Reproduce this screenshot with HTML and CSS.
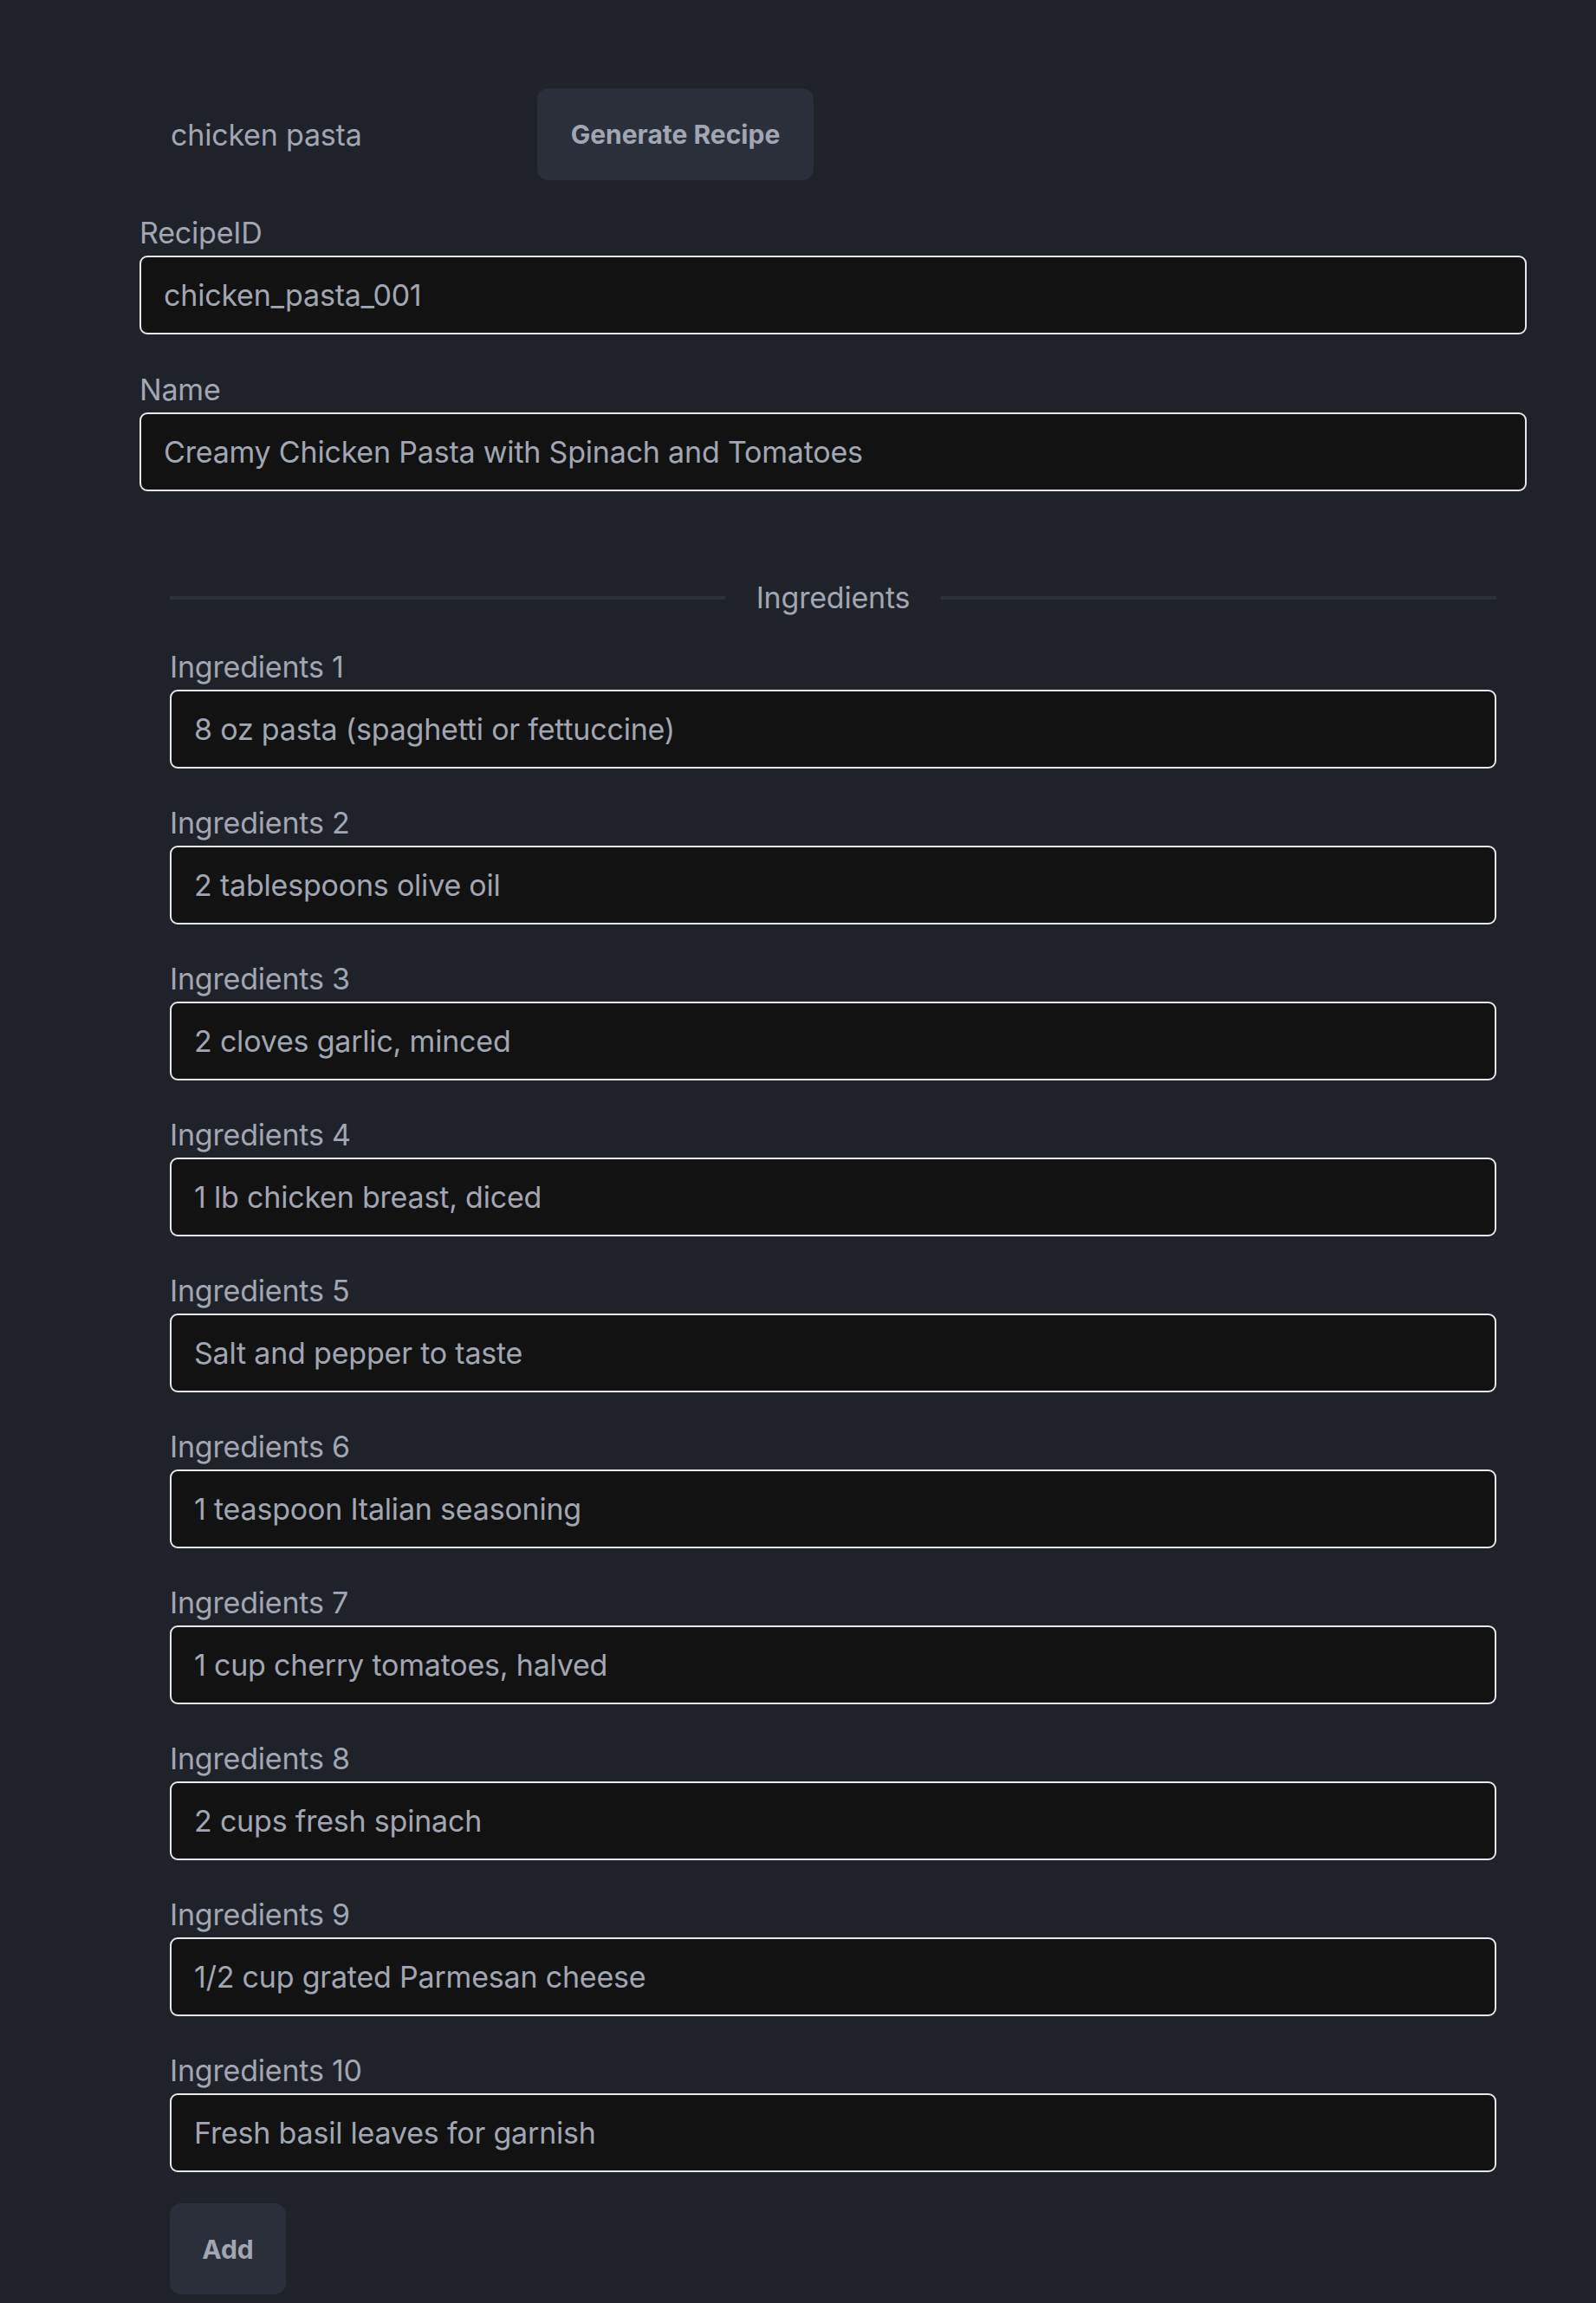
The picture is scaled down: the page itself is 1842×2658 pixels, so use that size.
FILE: index.html
```html
<!DOCTYPE html>
<html lang="en">
<head>
<meta charset="utf-8">
<title>Recipe</title>
<link rel="stylesheet" href="styles.css">
</head>
<body>
<main class="form">
  <div class="search-row">
    <input class="query" type="text" value="chicken pasta">
    <button class="btn btn-generate" type="button">Generate Recipe</button>
  </div>

  <div class="field">
    <label class="label">RecipeID</label>
    <input class="text-input" type="text" value="chicken_pasta_001">
  </div>

  <div class="field">
    <label class="label">Name</label>
    <input class="text-input" type="text" value="Creamy Chicken Pasta with Spinach and Tomatoes">
  </div>

  <section class="group">
    <div class="group-title">
      <span class="rule"></span>
      <span class="group-name">Ingredients</span>
      <span class="rule"></span>
    </div>

    <div class="group-fields">
      <div class="field field-sub">
        <label class="label">Ingredients 1</label>
        <input class="text-input" type="text" value="8 oz pasta (spaghetti or fettuccine)">
      </div>
      <div class="field field-sub">
        <label class="label">Ingredients 2</label>
        <input class="text-input" type="text" value="2 tablespoons olive oil">
      </div>
      <div class="field field-sub">
        <label class="label">Ingredients 3</label>
        <input class="text-input" type="text" value="2 cloves garlic, minced">
      </div>
      <div class="field field-sub">
        <label class="label">Ingredients 4</label>
        <input class="text-input" type="text" value="1 lb chicken breast, diced">
      </div>
      <div class="field field-sub">
        <label class="label">Ingredients 5</label>
        <input class="text-input" type="text" value="Salt and pepper to taste">
      </div>
      <div class="field field-sub">
        <label class="label">Ingredients 6</label>
        <input class="text-input" type="text" value="1 teaspoon Italian seasoning">
      </div>
      <div class="field field-sub">
        <label class="label">Ingredients 7</label>
        <input class="text-input" type="text" value="1 cup cherry tomatoes, halved">
      </div>
      <div class="field field-sub">
        <label class="label">Ingredients 8</label>
        <input class="text-input" type="text" value="2 cups fresh spinach">
      </div>
      <div class="field field-sub">
        <label class="label">Ingredients 9</label>
        <input class="text-input" type="text" value="1/2 cup grated Parmesan cheese">
      </div>
      <div class="field field-sub">
        <label class="label">Ingredients 10</label>
        <input class="text-input" type="text" value="Fresh basil leaves for garnish">
      </div>
    </div>

    <div class="actions">
      <button class="btn btn-add" type="button">Add</button>
    </div>
  </section>
</main>
</body>
</html>
```

FILE: styles.css
```css
* {
  box-sizing: border-box;
}

html, body {
  margin: 0;
  padding: 0;
  background: #1f2229;
}

body {
  font-family: Inter, "Noto Sans", "Liberation Sans", sans-serif;
  color: #a1a6b2;
}

.form {
  width: 1601px;
  margin-left: 161px;
  padding-top: 102px;
  display: flex;
  flex-direction: column;
}

.search-row {
  display: flex;
  align-items: center;
  gap: 22px;
  margin-bottom: 35px;
}

.query {
  width: 437px;
  height: 106px;
  padding: 0 36px;
  border: none;
  outline: none;
  background: transparent;
  font-family: inherit;
  font-size: 34px;
  letter-spacing: -0.2px;
  color: #a1a6b2;
}

.btn {
  height: 106px;
  padding: 0 37px;
  border: none;
  border-radius: 13px;
  background: #2b2f39;
  color: #a1a6b2;
  font-family: inherit;
  font-size: 30px;
  font-weight: 700;
  cursor: pointer;
}

.btn-generate {
  width: 319px;
  padding: 0;
}

.btn-add {
  width: 134px;
  height: 105px;
  padding: 0;
}

.field {
  display: flex;
  flex-direction: column;
  margin-bottom: 38px;
}

.label {
  font-size: 34px;
  line-height: 51px;
  height: 51px;
  margin-bottom: 1px;
  letter-spacing: -0.2px;
  color: #a1a6b2;
}

.text-input {
  height: 91px;
  width: 100%;
  padding: 0 26px;
  border: 2px solid #e6e7ea;
  border-radius: 9px;
  background: #121212;
  outline: none;
  font-family: inherit;
  font-size: 34px;
  letter-spacing: -0.2px;
  color: #a1a6b2;
}

.group {
  margin: 59px 35px 0;
  display: flex;
  flex-direction: column;
}

.group-title {
  display: flex;
  align-items: center;
  gap: 36px;
  height: 51px;
  margin-bottom: 29px;
}

.rule {
  flex: 1;
  height: 4px;
  background: #2c3038;
}

.group-name {
  font-size: 34px;
  line-height: 51px;
  letter-spacing: -0.2px;
  color: #a1a6b2;
}

.field-sub {
  margin-bottom: 37px;
}

.field-sub:last-child {
  margin-bottom: 36px;
}

.actions {
  display: flex;
}
```
